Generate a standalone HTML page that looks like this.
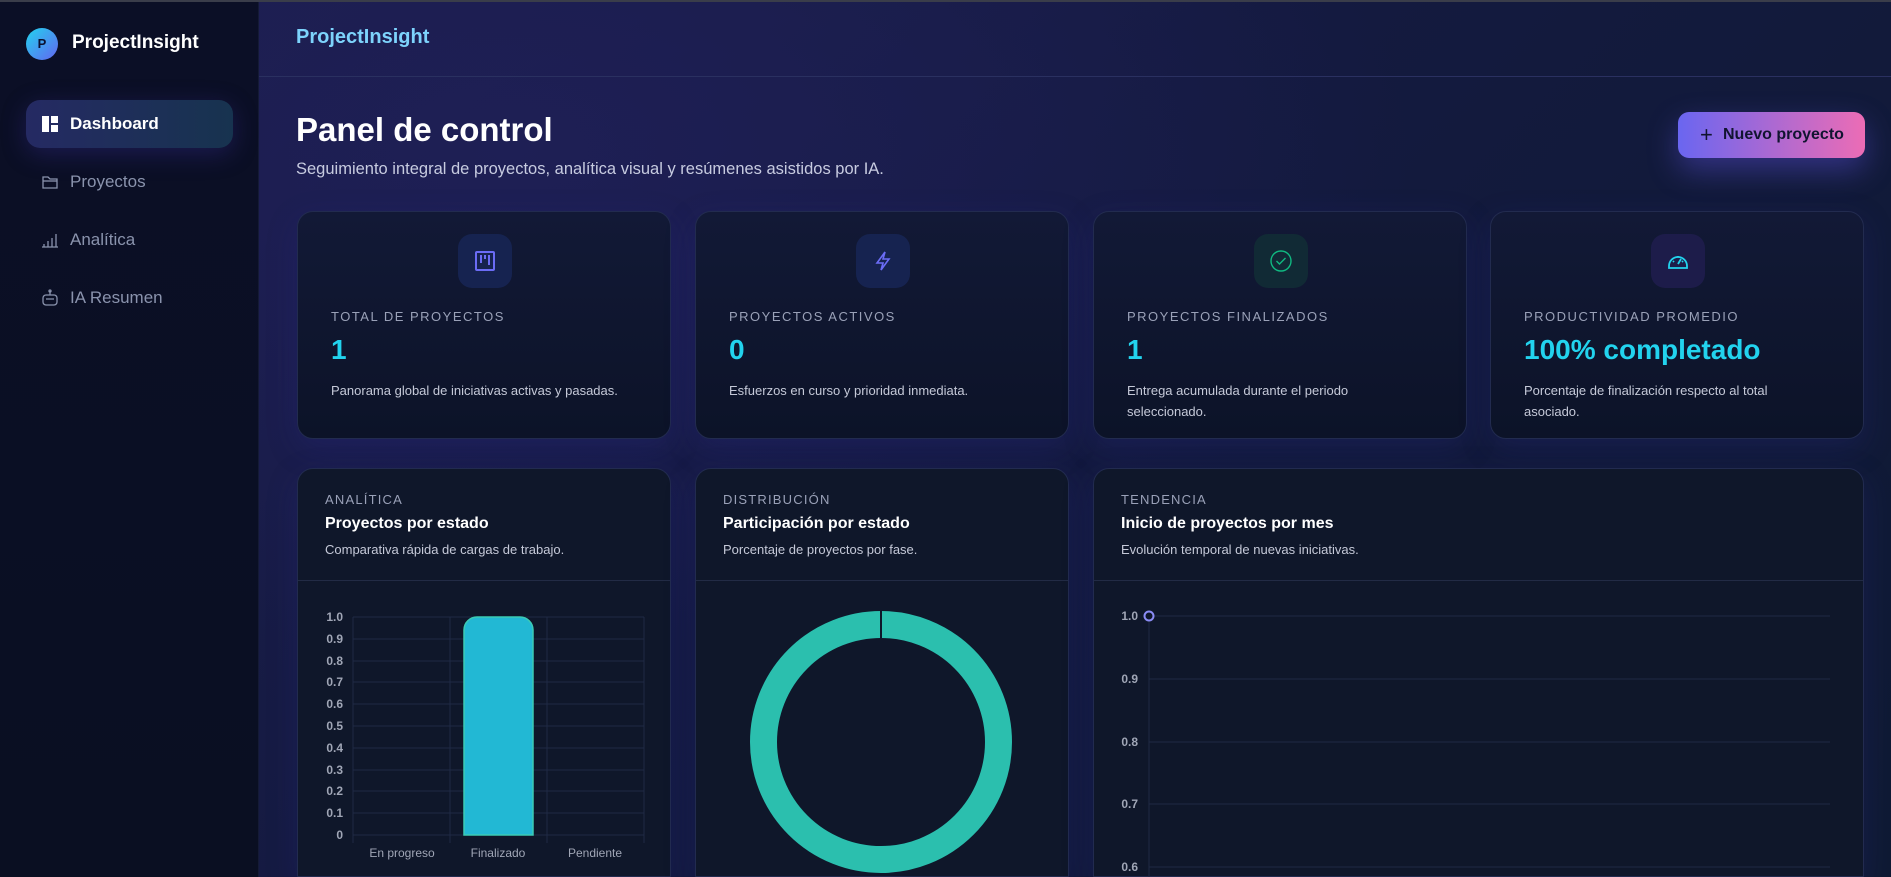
<!DOCTYPE html>
<html><head><meta charset="utf-8">
<style>
*{box-sizing:border-box;margin:0;padding:0}
html{width:1891px;height:877px;overflow:hidden;background:#0a0f24}
body{width:1891px;height:877px;overflow:hidden;font-family:"Liberation Sans",sans-serif;background:#0a0f24;position:relative}
.topline{position:absolute;left:0;top:0;width:1891px;height:2px;background:#3a3d4a;z-index:5}
.side{position:absolute;left:0;top:0;width:259px;height:877px;background:linear-gradient(180deg,#0b0f26,#0a0f22);border-right:1px solid #141a36}
.logo{position:absolute;left:26px;top:28px;width:32px;height:32px;border-radius:50%;background:linear-gradient(135deg,#22d3ee,#6366f1);color:#0b1030;font-weight:bold;font-size:13px;text-align:center;line-height:32px}
.brand{position:absolute;left:72px;top:32px;color:#fff;font-weight:bold;font-size:19px}
.nav{position:absolute;left:26px;width:207px;height:48px;border-radius:14px;color:#8a93ad;font-size:17px;line-height:48px;padding-left:44px}
.nav svg{position:absolute;left:15px;top:15px}
.nav.act{background:linear-gradient(90deg,#252a63,#17334f);color:#fff;font-weight:bold;box-shadow:0 6px 24px rgba(60,50,160,.35)}
.main{position:absolute;left:259px;top:0;width:1632px;height:877px;background:radial-gradient(ellipse 900px 500px at 250px 150px,#1e1f55 0%,rgba(30,31,85,0) 100%),linear-gradient(135deg,#1c1e4e 0%,#141a40 40%,#0f1a33 100%)}
.hdr{position:absolute;left:0;top:0;width:1632px;height:77px;border-bottom:1px solid #2a3060}
.hdr span{position:absolute;left:37px;top:26px;font-size:20px;font-weight:bold;color:#7dd3fc}
h1{position:absolute;left:296px;top:111px;color:#fff;font-size:33px;font-weight:bold}
.sub{position:absolute;left:296px;top:160px;color:#c7cbe0;font-size:16.5px}
.btn{position:absolute;left:1678px;top:112px;width:187px;height:46px;border-radius:11px;background:linear-gradient(90deg,#6a66f0,#ec6cb5);color:#111430;font-size:16px;font-weight:bold;line-height:46px;padding-left:45px;box-shadow:0 12px 30px rgba(90,80,220,.45)}
.btn:before{content:"+";position:absolute;left:22px;top:0;font-weight:normal;font-size:22px}
.card{position:absolute;border:1px solid #222b4f;border-radius:16px;background:linear-gradient(180deg,#121936,#0c1328);box-shadow:0 10px 30px rgba(40,40,140,.25);overflow:hidden}
.stat{top:211px;width:374px;height:228px}
.ib{position:absolute;left:160px;top:22px;width:54px;height:54px;border-radius:14px;display:flex;align-items:center;justify-content:center}
.lab{position:absolute;left:33px;top:97px;color:#9aa1b8;font-size:13px;letter-spacing:1.5px}
.val{position:absolute;left:33px;top:122px;color:#22d3ee;font-size:28px;font-weight:bold}
.desc{position:absolute;left:33px;top:168px;width:275px;color:#c5c9d8;font-size:13px;line-height:21px}
.nw{white-space:nowrap;width:330px}
.ch{top:468px;height:409px;background:#0f172a;border-bottom-left-radius:0;border-bottom-right-radius:0}
.ch .l{position:absolute;left:27px;top:23px;color:#9aa1b8;font-size:13px;letter-spacing:1.2px}
.ch .t{position:absolute;left:27px;top:46px;color:#fff;font-size:16px;font-weight:bold}
.ch .s{position:absolute;left:27px;top:73px;color:#c5c9d8;font-size:13px}
.ch .hl{position:absolute;left:0;top:111px;width:100%;height:1px;background:#222b45}
</style></head><body>
<div class="topline"></div>
<div class="side">
<div class="logo">P</div><div class="brand">ProjectInsight</div>
<div class="nav act" style="top:100px"><svg width="18" height="18" viewBox="0 0 18 18"><rect x="1" y="1" width="7" height="16" fill="#fff"/><rect x="10" y="1" width="7" height="7" fill="#fff"/><rect x="10" y="10" width="7" height="7" fill="#fff"/></svg>Dashboard</div>
<div class="nav" style="top:158px"><svg width="18" height="18" viewBox="0 0 18 18" fill="none" stroke="#8a93ad" stroke-width="1.3"><path d="M2 4h5l2 2h7v9H2z"/><path d="M2 8h14"/></svg>Proyectos</div>
<div class="nav" style="top:216px"><svg width="18" height="18" viewBox="0 0 18 18" fill="none" stroke="#8a93ad" stroke-width="1.3"><path d="M1 16h16M3 16v-3M7 16v-6M11 16V7M15 16V3"/></svg>Analítica</div>
<div class="nav" style="top:274px"><svg width="18" height="18" viewBox="0 0 18 18" fill="none" stroke="#8a93ad" stroke-width="1.3"><rect x="2" y="6" width="14" height="10" rx="3"/><path d="M9 2v4M5 10h8"/><circle cx="9" cy="2" r="1"/></svg>IA Resumen</div>
</div>
<div class="main"><div class="hdr"><span>ProjectInsight</span></div></div>
<h1>Panel de control</h1>
<div class="sub">Seguimiento integral de proyectos, analítica visual y resúmenes asistidos por IA.</div>
<div class="btn">Nuevo proyecto</div>

<div class="card stat" style="left:297px"><div class="ib" style="background:#162350"><svg width="22" height="22" viewBox="0 0 22 22" fill="none" stroke="#6b6cf5" stroke-width="2"><rect x="2" y="2" width="18" height="18" rx="1"/><path d="M7 5v8M11 5v4M15 5v10" /></svg></div><div class="lab">TOTAL DE PROYECTOS</div><div class="val">1</div><div class="desc nw">Panorama global de iniciativas activas y pasadas.</div></div>
<div class="card stat" style="left:695px"><div class="ib" style="background:#162350"><svg width="22" height="22" viewBox="0 0 22 22" fill="none" stroke="#6b6cf5" stroke-width="1.6"><path d="M13 2L5 13h6l-2 7 8-11h-6z"/></svg></div><div class="lab">PROYECTOS ACTIVOS</div><div class="val">0</div><div class="desc nw">Esfuerzos en curso y prioridad inmediata.</div></div>
<div class="card stat" style="left:1093px"><div class="ib" style="background:#112a35"><svg width="24" height="24" viewBox="0 0 24 24" fill="none" stroke="#10b981" stroke-width="1.4"><circle cx="12" cy="12" r="10"/><path d="M7.5 12l3 3 6-6"/></svg></div><div class="lab">PROYECTOS FINALIZADOS</div><div class="val">1</div><div class="desc">Entrega acumulada durante el periodo seleccionado.</div></div>
<div class="card stat" style="left:1490px"><div class="ib" style="background:#1d1c4a"><svg width="24" height="24" viewBox="0 0 24 24" fill="none" stroke="#22d3ee" stroke-width="1.8"><path d="M3 17a9 9 0 1 1 18 0v2H3z"/><path d="M12 15l3-5M7 12l1 1M12 7v1.5M17 12l-1 1"/></svg></div><div class="lab">PRODUCTIVIDAD PROMEDIO</div><div class="val">100% completado</div><div class="desc">Porcentaje de finalización respecto al total asociado.</div></div>

<div class="card ch" style="left:297px;width:374px"><div class="l">ANALÍTICA</div><div class="t">Proyectos por estado</div><div class="s">Comparativa rápida de cargas de trabajo.</div><div class="hl"></div></div>
<div class="card ch" style="left:695px;width:374px"><div class="l">DISTRIBUCIÓN</div><div class="t">Participación por estado</div><div class="s">Porcentaje de proyectos por fase.</div><div class="hl"></div></div>
<div class="card ch" style="left:1093px;width:771px"><div class="l">TENDENCIA</div><div class="t">Inicio de proyectos por mes</div><div class="s">Evolución temporal de nuevas iniciativas.</div><div class="hl"></div></div>

<svg style="position:absolute;left:0;top:0" width="1891" height="877">
<g stroke="#1f2a44" stroke-width="1">
<path d="M353 617H644M353 639H644M353 661H644M353 682H644M353 704H644M353 726H644M353 748H644M353 770H644M353 791H644M353 813H644M353 835H644"/>
<path d="M353 617V843M450 617V843M547 617V843M644 617V843"/>
<path d="M1149 616H1830M1149 679H1830M1149 742H1830M1149 804H1830M1149 867H1830M1149 616V877"/>
</g>
<path d="M464 835V630a13 13 0 0 1 13-13h43a13 13 0 0 1 13 13V835z" fill="#22b8d4" stroke="#3ccbb4" stroke-width="1.5"/>
<g font-family="Liberation Sans" font-size="12" font-weight="bold" fill="#a0a6b6" text-anchor="end">
<text x="343" y="621">1.0</text><text x="343" y="643">0.9</text><text x="343" y="665">0.8</text><text x="343" y="686">0.7</text><text x="343" y="708">0.6</text><text x="343" y="730">0.5</text><text x="343" y="752">0.4</text><text x="343" y="774">0.3</text><text x="343" y="795">0.2</text><text x="343" y="817">0.1</text><text x="343" y="839">0</text>
<text x="1138" y="620">1.0</text><text x="1138" y="683">0.9</text><text x="1138" y="746">0.8</text><text x="1138" y="808">0.7</text><text x="1138" y="871">0.6</text>
</g>
<g font-family="Liberation Sans" font-size="12" fill="#a0a6b6" text-anchor="middle">
<text x="402" y="857">En progreso</text><text x="498" y="857">Finalizado</text><text x="595" y="857">Pendiente</text>
</g>
<circle cx="881" cy="742" r="117.5" fill="none" stroke="#2bbfae" stroke-width="27"/>
<line x1="881" y1="610" x2="881" y2="638" stroke="#0f172a" stroke-width="2"/>
<circle cx="1149" cy="616" r="4.5" fill="#0f172a" stroke="#8b8cf5" stroke-width="2"/>
</svg>
</body></html>
